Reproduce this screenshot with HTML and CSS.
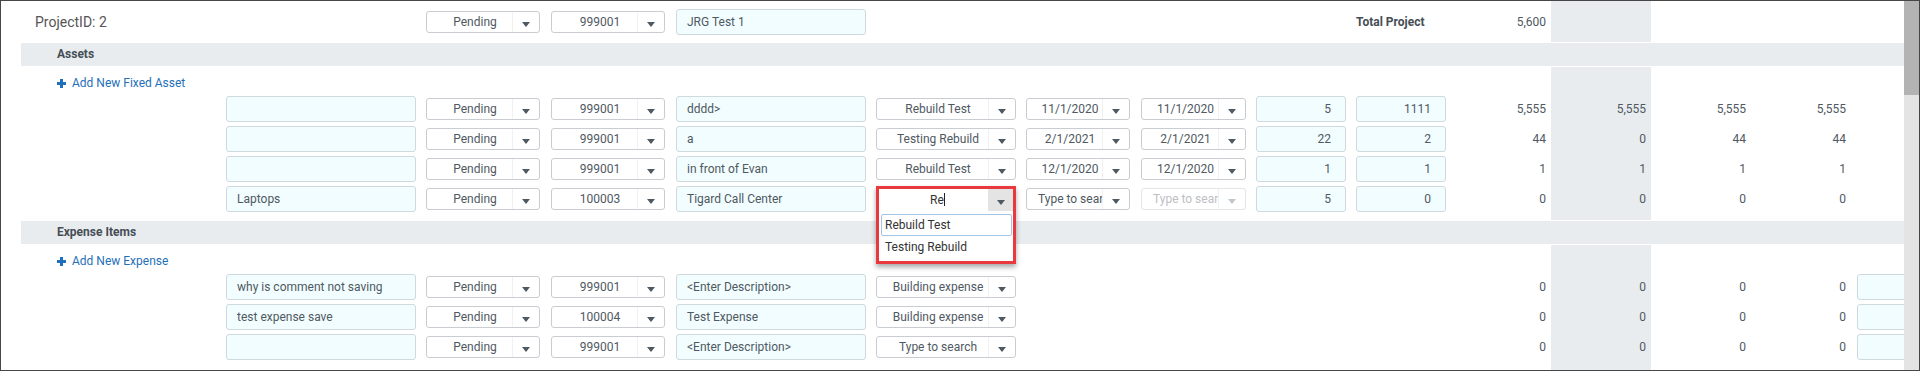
FILE: index.html
```html
<!DOCTYPE html>
<html lang="en">
<head>
    <meta charset="UTF-8">
    <title>Project Budget</title>
    <link rel="stylesheet" href="styles.css">
</head>
<body>
    <div class="frame">
        <div class="viewport">
            <div class="sheet">
                <div class="band">
                    <div class="row row-project">
                        <div class="project-id">ProjectID: 2</div>
                        <div></div>
                        <div class="sel status"><span class="sel-val">Pending</span><span class="sel-btn"></span></div>
                        <div class="sel proj"><span class="sel-val">999001</span><span class="sel-btn"></span></div>
                        <div class="txt desc">JRG Test 1</div>
                        <div></div><div></div><div></div><div></div>
                        <div class="total-label">Total Project</div>
                        <div class="val">5,600</div>
                    </div>
                </div>

                <div class="section-title">Assets</div>
                <div class="band section">
                    <div class="add-row"><svg class="plus" width="9" height="9" viewBox="0 0 9 9"><path d="M3 0h3v9H3zM0 3h9v3H0z" fill="currentColor"/></svg>Add New Fixed Asset</div>

                    <div class="row">
                        <div></div>
                        <div class="txt name"></div>
                        <div class="sel status"><span class="sel-val">Pending</span><span class="sel-btn"></span></div>
                        <div class="sel proj"><span class="sel-val">999001</span><span class="sel-btn"></span></div>
                        <div class="txt desc">dddd&gt;</div>
                        <div class="sel cat"><span class="sel-val">Rebuild Test</span><span class="sel-btn"></span></div>
                        <div class="sel date"><span class="sel-val">11/1/2020</span><span class="sel-btn"></span></div>
                        <div class="sel date2"><span class="sel-val">11/1/2020</span><span class="sel-btn"></span></div>
                        <div class="txt num qty">5</div>
                        <div class="txt num qty">1111</div>
                        <div class="val">5,555</div><div class="val">5,555</div><div class="val">5,555</div><div class="val">5,555</div>
                    </div>

                    <div class="row">
                        <div></div>
                        <div class="txt name"></div>
                        <div class="sel status"><span class="sel-val">Pending</span><span class="sel-btn"></span></div>
                        <div class="sel proj"><span class="sel-val">999001</span><span class="sel-btn"></span></div>
                        <div class="txt desc">a</div>
                        <div class="sel cat"><span class="sel-val">Testing Rebuild</span><span class="sel-btn"></span></div>
                        <div class="sel date"><span class="sel-val">2/1/2021</span><span class="sel-btn"></span></div>
                        <div class="sel date2"><span class="sel-val">2/1/2021</span><span class="sel-btn"></span></div>
                        <div class="txt num qty">22</div>
                        <div class="txt num qty">2</div>
                        <div class="val">44</div><div class="val">0</div><div class="val">44</div><div class="val">44</div>
                    </div>

                    <div class="row">
                        <div></div>
                        <div class="txt name"></div>
                        <div class="sel status"><span class="sel-val">Pending</span><span class="sel-btn"></span></div>
                        <div class="sel proj"><span class="sel-val">999001</span><span class="sel-btn"></span></div>
                        <div class="txt desc">in front of Evan</div>
                        <div class="sel cat"><span class="sel-val">Rebuild Test</span><span class="sel-btn"></span></div>
                        <div class="sel date"><span class="sel-val">12/1/2020</span><span class="sel-btn"></span></div>
                        <div class="sel date2"><span class="sel-val">12/1/2020</span><span class="sel-btn"></span></div>
                        <div class="txt num qty">1</div>
                        <div class="txt num qty">1</div>
                        <div class="val">1</div><div class="val">1</div><div class="val">1</div><div class="val">1</div>
                    </div>

                    <div class="row">
                        <div></div>
                        <div class="txt name">Laptops</div>
                        <div class="sel status"><span class="sel-val">Pending</span><span class="sel-btn"></span></div>
                        <div class="sel proj"><span class="sel-val">100003</span><span class="sel-btn"></span></div>
                        <div class="txt desc">Tigard Call Center</div>
                        <div class="sel cat open">
                            <span class="sel-val"></span><span class="sel-btn"></span>
                            <div class="popup">
                                <div class="combo"><span class="combo-val">Re<span class="caret"></span></span><span class="combo-btn"></span></div>
                                <div class="combo-list">
                                    <div class="opt hot">Rebuild Test</div>
                                    <div class="opt">Testing Rebuild</div>
                                </div>
                            </div>
                        </div>
                        <div class="sel date"><span class="sel-val">Type to search</span><span class="sel-btn"></span></div>
                        <div class="sel date2 off"><span class="sel-val">Type to search</span><span class="sel-btn"></span></div>
                        <div class="txt num qty">5</div>
                        <div class="txt num qty">0</div>
                        <div class="val">0</div><div class="val">0</div><div class="val">0</div><div class="val">0</div>
                    </div>
                </div>

                <div class="section-title">Expense Items</div>
                <div class="band section section-last">
                    <div class="add-row"><svg class="plus" width="9" height="9" viewBox="0 0 9 9"><path d="M3 0h3v9H3zM0 3h9v3H0z" fill="currentColor"/></svg>Add New Expense</div>

                    <div class="row">
                        <div></div>
                        <div class="txt name">why is comment not saving</div>
                        <div class="sel status"><span class="sel-val">Pending</span><span class="sel-btn"></span></div>
                        <div class="sel proj"><span class="sel-val">999001</span><span class="sel-btn"></span></div>
                        <div class="txt desc">&lt;Enter Description&gt;</div>
                        <div class="sel cat"><span class="sel-val">Building expense</span><span class="sel-btn"></span></div>
                        <div></div><div></div><div></div><div></div>
                        <div class="val">0</div><div class="val">0</div><div class="val">0</div><div class="val">0</div>
                        <div class="txt extra"></div>
                    </div>

                    <div class="row">
                        <div></div>
                        <div class="txt name">test expense save</div>
                        <div class="sel status"><span class="sel-val">Pending</span><span class="sel-btn"></span></div>
                        <div class="sel proj"><span class="sel-val">100004</span><span class="sel-btn"></span></div>
                        <div class="txt desc">Test Expense</div>
                        <div class="sel cat"><span class="sel-val">Building expense</span><span class="sel-btn"></span></div>
                        <div></div><div></div><div></div><div></div>
                        <div class="val">0</div><div class="val">0</div><div class="val">0</div><div class="val">0</div>
                        <div class="txt extra"></div>
                    </div>

                    <div class="row">
                        <div></div>
                        <div class="txt name"></div>
                        <div class="sel status"><span class="sel-val">Pending</span><span class="sel-btn"></span></div>
                        <div class="sel proj"><span class="sel-val">999001</span><span class="sel-btn"></span></div>
                        <div class="txt desc">&lt;Enter Description&gt;</div>
                        <div class="sel cat"><span class="sel-val">Type to search</span><span class="sel-btn"></span></div>
                        <div></div><div></div><div></div><div></div>
                        <div class="val">0</div><div class="val">0</div><div class="val">0</div><div class="val">0</div>
                        <div class="txt extra"></div>
                    </div>
                </div>
            </div>
        </div>
        <div class="scrollbar"><div class="scrollbar-thumb"></div></div>
    </div>
</body>
</html>
```

FILE: styles.css
```css
body {
    margin: 0;
    font-family: Roboto, "Liberation Sans", sans-serif;
    font-size: 12px;
    color: #4f5962;
    background: #fff;
}
.frame {
    height: 371px;
    box-sizing: border-box;
    border: 1px solid #464646;
    display: flex;
}
.viewport {
    flex: 1;
    overflow: hidden;
}
.scrollbar {
    width: 15px;
    background: #e4e4e4;
}
.scrollbar-thumb {
    height: 94px;
    background: #b3b3b3;
}
.sheet {
    margin-left: 20px;
    width: 1960px;
}
/* grey column behind the current period */
.band {
    background: linear-gradient(to right, transparent 1530px, #e9ecef 1530px, #e9ecef 1630px, transparent 1630px);
}
.section {
    padding-bottom: 6px;
}
.section-last {
    padding-bottom: 20px;
}
.section-title {
    background: #e9ecef;
    height: 23px;
    line-height: 23px;
    margin: 1px 0;
    padding-left: 36px;
    font-weight: bold;
    color: #454d55;
}
.add-row {
    height: 27px;
    box-sizing: border-box;
    padding: 8px 0 0 36px;
    line-height: 16px;
    color: #1f6fba;
}
.plus {
    margin-right: 6px;
    vertical-align: -1px;
}
.row {
    display: grid;
    grid-template-columns: 205px 200px 125px 125px 200px 150px 115px 115px 100px 95px 100px 100px 100px 100px 140px;
    align-items: center;
    height: 30px;
}
.row-project {
    height: 41px;
}
.project-id {
    padding-left: 14px;
    font-size: 14px;
    color: #555;
    white-space: nowrap;
}
.total-label {
    font-weight: bold;
    color: #454d55;
    white-space: nowrap;
}
.val {
    text-align: right;
    padding-right: 5px;
}

.txt {
    height: 26px;
    box-sizing: border-box;
    border: 1px solid #cfd9de;
    border-radius: 3px;
    background: #f2fdff;
    padding: 0 10px;
    line-height: 24px;
    white-space: nowrap;
    overflow: hidden;
}
.num {
    text-align: right;
    padding-right: 14px;
}
.name, .desc { width: 190px; }
.qty { width: 90px; }
.extra {
    width: 120px;
    margin-left: 6px;
}

.sel {
    height: 22px;
    box-sizing: border-box;
    border: 1px solid #c9cdd1;
    border-radius: 3px;
    background: #fff;
    display: flex;
}
.status, .proj { width: 114px; }
.cat { width: 140px; }
.date { width: 104px; }
.date2 { width: 105px; }
.sel-val {
    flex: 1;
    min-width: 0;
    overflow: hidden;
    white-space: nowrap;
    text-align: center;
    padding-left: 11px;
    line-height: 20px;
}
.sel-btn {
    width: 26px;
    border-left: 1px solid #f1f1f1;
    display: flex;
    justify-content: center;
    align-items: center;
}
.sel-btn::after, .combo-btn::after {
    content: "";
    border-left: 4px solid transparent;
    border-right: 4px solid transparent;
    border-top: 5px solid #4f5962;
    margin-top: 5px;
}
.sel.off {
    border-color: #e3e5e7;
    color: #bcc0c4;
}
.sel.off .sel-btn::after {
    border-top-color: #c3c7cb;
}

.sel.open {
    position: relative;
}
.popup {
    position: absolute;
    left: -1px;
    top: -3px;
    width: 140px;
    height: 78px;
    box-sizing: border-box;
    border: 3px solid #e8393e;
    background: #fff;
    box-shadow: 0 3px 5px rgba(0, 0, 0, 0.35);
    color: #333;
    z-index: 2;
}
.combo {
    display: flex;
    height: 22px;
}
.combo-val {
    flex: 1;
    text-align: center;
    padding-left: 8px;
    line-height: 22px;
}
.caret {
    display: inline-block;
    width: 1px;
    height: 13px;
    background: #222;
    vertical-align: -2px;
}
.combo-btn {
    width: 25px;
    background: #e4e4e4;
    display: flex;
    justify-content: center;
    align-items: center;
}
.combo-list {
    padding: 3px 1px 0 2px;
}
.opt {
    height: 22px;
    box-sizing: border-box;
    line-height: 20px;
    padding-left: 3px;
    border: 1px solid transparent;
    border-radius: 2px;
}
.opt.hot {
    border-color: #a3c4e6;
}
```
